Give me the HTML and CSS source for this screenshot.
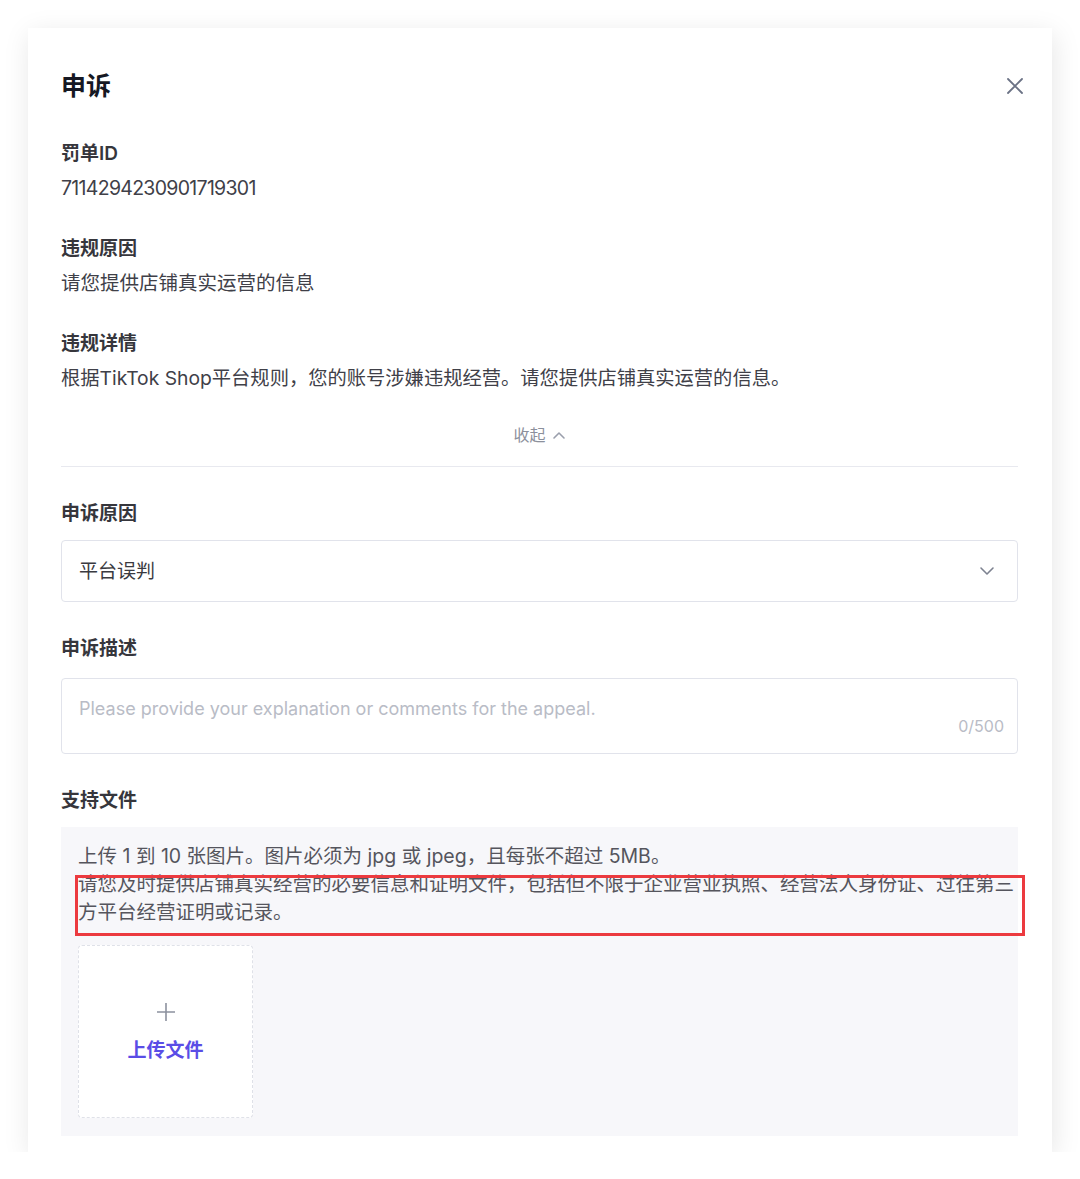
FILE: index.html
```html
<!DOCTYPE html>
<html lang="zh-CN">
<head>
  <meta charset="UTF-8" />
  <meta name="viewport" content="width=device-width, initial-scale=1.0"/>
  <title>申诉</title>
  <link rel="stylesheet" href="styles.css">
</head>
<body>

  <div class="modal">
    <div class="modal-head">
      <h2 class="modal-title">申诉</h2>
      <button class="close-btn" aria-label="close">
        <svg width="18" height="18" viewBox="0 0 18 18"><path d="M2 2 L16 16 M16 2 L2 16" stroke="#6b7285" stroke-width="1.8" stroke-linecap="round"/></svg>
      </button>
    </div>

    <div class="info">
      <div class="label">罚单ID</div>
      <div class="value num">7114294230901719301</div>
    </div>
    <div class="info">
      <div class="label">违规原因</div>
      <div class="value">请您提供店铺真实运营的信息</div>
    </div>
    <div class="info">
      <div class="label">违规详情</div>
      <div class="value detail">根据TikTok Shop平台规则，您的账号涉嫌违规经营。请您提供店铺真实运营的信息。</div>
    </div>

    <div class="collapse">
      收起
      <svg width="14" height="10" viewBox="0 0 14 10"><path d="M2 8 L7 3 L12 8" fill="none" stroke="#9a9fac" stroke-width="1.6" stroke-linecap="round" stroke-linejoin="round"/></svg>
    </div>
    <hr class="divider">

    <div class="field">
      <div class="label">申诉原因</div>
      <div class="select">
        <span>平台误判</span>
        <svg width="16" height="10" viewBox="0 0 16 10"><path d="M2 2 L8 8 L14 2" fill="none" stroke="#7d8290" stroke-width="1.6" stroke-linecap="round" stroke-linejoin="round"/></svg>
      </div>
    </div>

    <div class="field">
      <div class="label">申诉描述</div>
      <div class="textarea">
        <div class="placeholder">Please provide your explanation or comments for the appeal.</div>
        <div class="counter">0/500</div>
      </div>
    </div>

    <div class="field">
      <div class="label">支持文件</div>
      <div class="upload-area">
        <p class="hint">上传 1 到 10 张图片。图片必须为 jpg 或 jpeg，且每张不超过 5MB。<br>请您及时提供店铺真实经营的必要信息和证明文件，包括但不限于企业营业执照、经营法人身份证、过往第三方平台经营证明或记录。</p>
        <div class="mark"></div>
        <div class="upload-box">
          <svg width="22" height="22" viewBox="0 0 22 22"><path d="M11 2 V20 M2 11 H20" stroke="#8c919e" stroke-width="1.6"/></svg>
          <span>上传文件</span>
        </div>
      </div>
    </div>
  </div>

</body>
</html>
```

FILE: styles.css
```css
body {
  margin: 0;
  padding: 28px 0 0 28px;
  background: #fff;
  font-family: 'Inter', 'Noto Sans CJK SC', sans-serif;
  color: #333;
}

.modal {
  width: 1024px;
  box-sizing: border-box;
  padding: 41px 34px 16px 33px;
  background: #fff;
  box-shadow: 2px 6px 26px rgba(0, 0, 0, 0.1);
}

.modal-head {
  display: flex;
  justify-content: space-between;
  align-items: center;
}

.modal-title {
  margin: 0;
  font-size: 25px;
  line-height: 34px;
  font-weight: 700;
  color: #161823;
}

.close-btn {
  border: none;
  background: none;
  padding: 0;
  margin-right: -6px;
  width: 18px;
  height: 18px;
  cursor: pointer;
}

.label {
  font-size: 19px;
  line-height: 28px;
  font-weight: 600;
  color: #36363c;
}

.value {
  margin-top: 6px;
  font-size: 19.5px;
  line-height: 28px;
  color: #404048;
}

.num {
  letter-spacing: -0.7px;
}

.detail {
  font-size: 19.3px;
}

.info {
  margin-top: 33px;
}

.modal-head + .info {
  margin-top: 37px;
}

.collapse {
  margin-top: 29px;
  display: flex;
  justify-content: center;
  align-items: center;
  gap: 6px;
  font-size: 16px;
  line-height: 28px;
  color: #8c909c;
}

.divider {
  margin: 17px 0 0;
  border: none;
  border-top: 1px solid #e8e9ef;
}

.field {
  margin-top: 33px;
}

.select {
  margin-top: 12px;
  height: 62px;
  box-sizing: border-box;
  border: 1px solid #e1e3eb;
  border-radius: 4px;
  padding: 0 22px 3px 17px;
  display: flex;
  justify-content: space-between;
  align-items: center;
  font-size: 19px;
  color: #3a3a40;
}

.select svg {
  margin-top: 3px;
}

.textarea {
  margin-top: 15px;
  height: 76px;
  box-sizing: border-box;
  border: 1px solid #e1e3eb;
  border-radius: 4px;
  padding: 16px 13px 0 17px;
}

.placeholder {
  font-size: 18px;
  line-height: 28px;
  color: #b9bcc6;
}

.counter {
  text-align: right;
  font-size: 16px;
  line-height: 20px;
  margin-top: -7px;
  color: #b9bcc6;
}

.upload-area {
  position: relative;
  margin-top: 12px;
  background: #f7f7fa;
  padding: 15px 2px 18px 17px;
}

.hint {
  margin: 0;
  font-size: 19.5px;
  line-height: 28px;
  color: #55555d;
}

.mark {
  position: absolute;
  left: 14px;
  top: 48px;
  width: 950px;
  height: 61px;
  box-sizing: border-box;
  border: 3px solid #ec3a3f;
}

.upload-box {
  margin-top: 19px;
  width: 175px;
  height: 173px;
  box-sizing: border-box;
  background: #fff;
  border: 1px dashed #dfe1e8;
  border-radius: 4px;
  display: flex;
  flex-direction: column;
  align-items: center;
  justify-content: center;
  gap: 12px;
  font-size: 19px;
  font-weight: 600;
  color: #5a4de6;
}
```
